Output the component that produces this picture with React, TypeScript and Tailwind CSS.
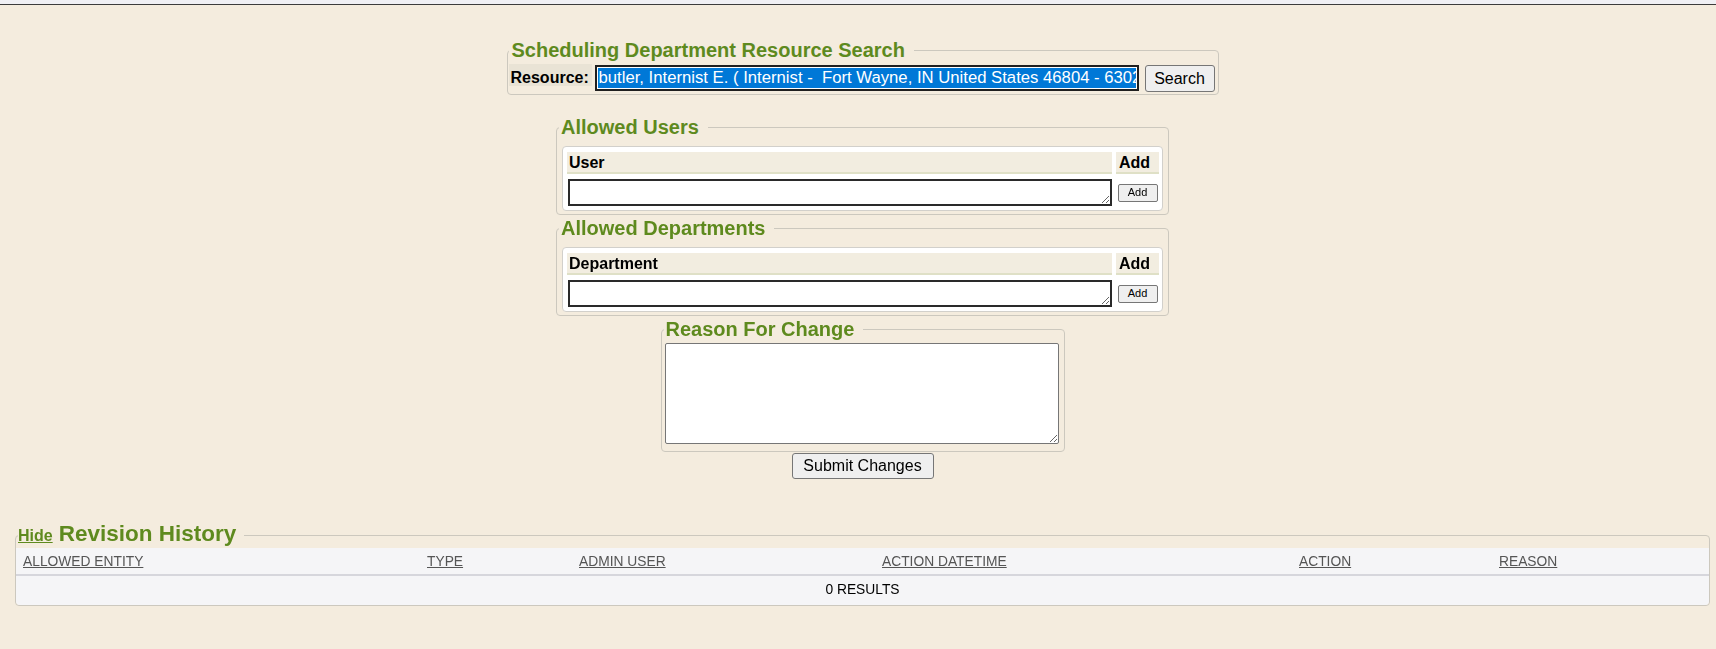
import { useState } from 'react';

const columns = ['ALLOWED ENTITY', 'TYPE', 'ADMIN USER', 'ACTION DATETIME', 'ACTION', 'REASON'];

function AllowedBox({ title, label }: { title: string; label: string }) {
  return (
    <fieldset className="w-[612px] border border-[#ccc8be] rounded-[4px] px-[5px] pb-[3px]">
      <legend className="-ml-[3px] pl-[2px] pr-[9px] text-[20px] leading-[22px] font-bold text-[#5e8a1e]">{title}</legend>
      <div className="mt-[8px] bg-white border border-[#d2d0cb] rounded-[4px] pt-[5px] pl-[4px] pr-[3px] pb-[4px]">
        <div className="grid grid-cols-[1fr_43px] gap-x-[4px] gap-y-[5px]">
          <div className="h-[22px] bg-[#f2ede0] border-b-2 border-[#dfe0c6] pl-[2px] pt-[1px] text-[16px] leading-[19px] font-bold text-black">
            {label}
          </div>
          <div className="h-[22px] bg-[#f2ede0] border-b-2 border-[#dfe0c6] pl-[3px] pt-[1px] text-[16px] leading-[19px] font-bold text-black">
            Add
          </div>
          <textarea className="ml-[1px] w-[544px] h-[27px] border-2 border-[#2a2a2a] bg-white resize-y block" />
          <div className="flex items-center justify-center">
            <button className="w-[40px] h-[18px] bg-[#efefef] border border-[#767676] rounded-[2px] text-[11px] leading-none text-black">
              Add
            </button>
          </div>
        </div>
      </div>
    </fieldset>
  );
}

export default function App() {
  const [reason, setReason] = useState('');
  const [showHistory, setShowHistory] = useState(true);

  return (
    <div className="min-h-screen bg-[#f4ecde] font-['Liberation_Sans',Arial,sans-serif] text-black">
      <div className="h-[5px] bg-[#f0f0f4] border-b border-[#3c3c3c]" />

      <div className="pl-[15px] pr-[6px] pt-[34px] pb-[40px]">
        <div className="flex flex-col items-center">
          {/* Resource search */}
          <fieldset className="w-[712px] border border-[#ccc8be] rounded-[4px] pl-[1px] pr-[3px] pb-[2px]">
            <legend className="pl-[3px] pr-[9px] text-[20px] leading-[22px] font-bold text-[#5e8a1e]">
              Scheduling Department Resource Search
            </legend>
            <div className="mt-[3px] flex items-start">
              <div className="h-[22px] w-[83px] bg-[#e9e3d5] px-[2px] pt-[4px] text-[16px] leading-[20px] font-bold">Resource:</div>
              <div className="ml-[3px] mt-[1px] w-[544px] h-[26px] border-2 border-[#1f1f1f] bg-white p-[1px]">
                <div className="h-full bg-[#0078d7] pl-[1px] overflow-hidden whitespace-pre text-white text-[16.7px] leading-[20px]">
                  {'butler, Internist E. ( Internist -  Fort Wayne, IN United States 46804 - 6302'}
                </div>
              </div>
              <button className="ml-[6px] mt-[1px] w-[70px] h-[27px] bg-[#efefef] border border-[#767676] rounded-[3px] text-[16px] leading-none">
                Search
              </button>
            </div>
          </fieldset>

          <div className="mt-[21px]">
            <AllowedBox title="Allowed Users" label="User" />
          </div>
          <div className="mt-[2px]">
            <AllowedBox title="Allowed Departments" label="Department" />
          </div>

          {/* Reason */}
          <fieldset className="mt-[2px] w-[404px] border border-[#ccc8be] rounded-[4px] pl-[3px] pr-[5px] pb-[7px]">
            <legend className="-ml-[1px] pl-[2px] pr-[9px] text-[20px] leading-[22px] font-bold text-[#5e8a1e]">Reason For Change</legend>
            <textarea
              value={reason}
              onChange={(e) => setReason(e.target.value)}
              className="mt-[3px] block w-[394px] h-[101px] border border-[#767676] rounded-[2px] bg-white"
            />
          </fieldset>
          <button className="mt-[1px] w-[142px] h-[26px] bg-[#efefef] border border-[#767676] rounded-[3px] text-[16px] leading-none">
            Submit Changes
          </button>
        </div>

        {/* Revision history */}
        <fieldset className="mt-[43px] border border-[#ccc8be] rounded-[4px]">
          <legend className="ml-[2px] pr-[8px] leading-[24px] font-bold text-[#5e8a1e]">
            <a
              href="#"
              onClick={(e) => {
                e.preventDefault();
                setShowHistory(!showHistory);
              }}
              className="text-[16px] underline text-[#5e8a1e]"
            >
              Hide
            </a>
            <span className="ml-[6px] text-[22.5px]">Revision History</span>
          </legend>
          {showHistory && (
            <div className="bg-[#f5f5f7] rounded-b-[4px]">
              <div className="h-[28px] border-b-2 border-[#d6d6dc] pl-[7px] grid grid-cols-[404px_152px_303px_417px_200px_1fr] items-center">
                {columns.map((c) => (
                  <div key={c}>
                    <a href="#" className="text-[13.8px] text-[#555] underline">
                      {c}
                    </a>
                  </div>
                ))}
              </div>
              <div className="h-[29px] flex items-center justify-center text-[13.8px] text-black">0 RESULTS</div>
            </div>
          )}
        </fieldset>
      </div>
    </div>
  );
}
